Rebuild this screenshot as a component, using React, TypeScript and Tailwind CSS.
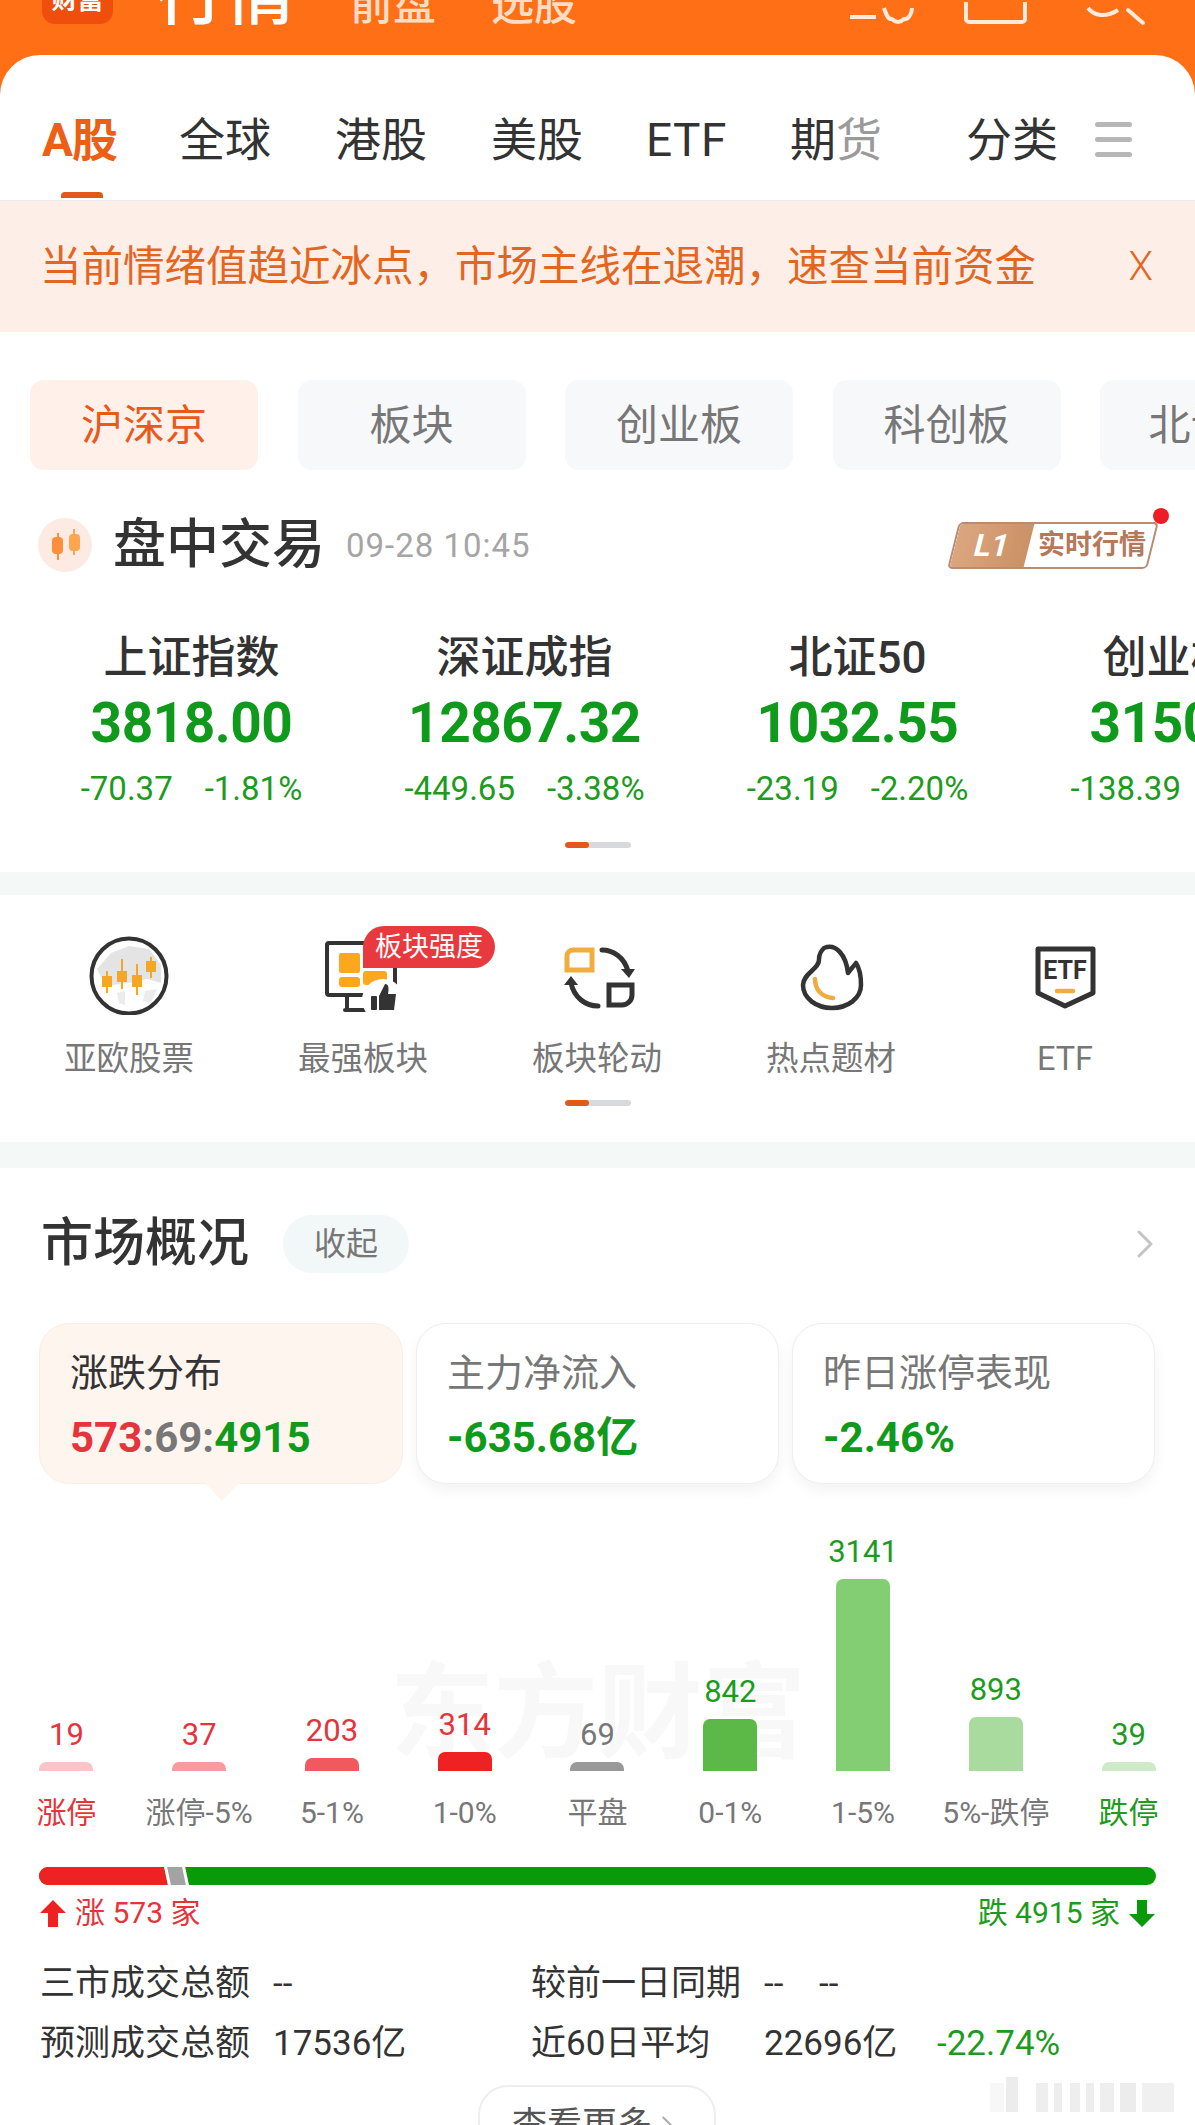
import { ChevronRight } from 'lucide-react';

const topTabs = [
  { label: 'A股', x: 'ml-[42px]' },
];

const pills = ['沪深京', '板块', '创业板', '科创板', '北证50'];

const indices = [
  { name: '上证指数', value: '3818.00', diff: '-70.37', pct: '-1.81%' },
  { name: '深证成指', value: '12867.32', diff: '-449.65', pct: '-3.38%' },
  { name: '北证50', value: '1032.55', diff: '-23.19', pct: '-2.20%' },
  { name: '创业板指', value: '3150.62', diff: '-138.39', pct: '-4.21%' },
];

const bars = [
  { value: '19', label: '涨停', h: 'h-[9px]', bar: 'bg-[#fcc4c8]', text: 'text-[#e5343b]', labelText: 'text-[#e5343b]' },
  { value: '37', label: '涨停-5%', h: 'h-[9px]', bar: 'bg-[#f99a9e]', text: 'text-[#e5343b]', labelText: 'text-[#777777]' },
  { value: '203', label: '5-1%', h: 'h-[13px]', bar: 'bg-[#f2595e]', text: 'text-[#e5343b]', labelText: 'text-[#777777]' },
  { value: '314', label: '1-0%', h: 'h-[19px]', bar: 'bg-[#ee2222]', text: 'text-[#e5343b]', labelText: 'text-[#777777]' },
  { value: '69', label: '平盘', h: 'h-[9px]', bar: 'bg-[#999999]', text: 'text-[#777777]', labelText: 'text-[#777777]' },
  { value: '842', label: '0-1%', h: 'h-[52px]', bar: 'bg-[#5cb947]', text: 'text-[#1d9b1d]', labelText: 'text-[#777777]' },
  { value: '3141', label: '1-5%', h: 'h-[192px]', bar: 'bg-[#83cd72]', text: 'text-[#1d9b1d]', labelText: 'text-[#777777]' },
  { value: '893', label: '5%-跌停', h: 'h-[54px]', bar: 'bg-[#aadb9e]', text: 'text-[#1d9b1d]', labelText: 'text-[#777777]' },
  { value: '39', label: '跌停', h: 'h-[9px]', bar: 'bg-[#cfeac9]', text: 'text-[#1d9b1d]', labelText: 'text-[#1d9b1d]' },
];

function GlobeIcon() {
  const candles = [
    { x: 18, wick: [36, 58], body: [41, 52] },
    { x: 33, wick: [24, 54], body: [36, 47] },
    { x: 48, wick: [29, 60], body: [40, 52] },
    { x: 62, wick: [22, 43], body: [26, 37] },
  ];
  return (
    <svg viewBox="0 0 80 80" className="w-20 h-20">
      <circle cx="40" cy="41" r="37.5" fill="#fff" stroke="#333" strokeWidth="4" />
      <path d="M8 34 L22 18 L40 11 L60 14 L72 30 L72 48 L58 44 L40 48 L24 50 L14 46Z" fill="#e4e4e4" />
      <path d="M56 56 L68 54 L62 68 L54 66Z M28 58 L36 56 L36 70 L30 68Z" fill="#ececec" />
      {candles.map((c) => (
        <g key={c.x}>
          <rect x={c.x - 1} y={c.wick[0]} width="2" height={c.wick[1] - c.wick[0]} fill="#f5a623" />
          <rect x={c.x - 5} y={c.body[0]} width="10" height={c.body[1] - c.body[0]} fill="#f5a623" />
        </g>
      ))}
    </svg>
  );
}

function MonitorIcon() {
  return (
    <div className="relative w-20 h-20">
      <svg viewBox="0 0 80 80" className="w-20 h-20 overflow-visible">
        <path d="M42 8 H6 a2 2 0 0 0-2 2 V58 a2 2 0 0 0 2 2 H70 a2 2 0 0 0 2-2 V30" fill="none" stroke="#333" strokeWidth="4" />
        <path d="M24 60 V74 M22 75 H46" fill="none" stroke="#333" strokeWidth="4" strokeLinecap="round" />
        <rect x="16" y="18" width="21" height="20" rx="2" fill="#fba81f" />
        <rect x="16" y="42" width="21" height="10" rx="3" fill="#fba81f" />
        <rect x="40" y="36" width="24" height="14" rx="3" fill="#fba81f" />
        <circle cx="60" cy="65" r="21" fill="#fff" />
        <rect x="48" y="61" width="6" height="14" rx="1" fill="#333" />
        <path d="M56 61 L62 49 C66 49 66 54 65 59 H73 L71 75 H56Z" fill="#333" />
      </svg>
      <div className="absolute left-[40px] top-[-9px] w-[132px] h-[42px] bg-[#e83a3e] rounded-r-full rounded-tl-full flex items-center justify-center text-[27px] leading-none text-white whitespace-nowrap">
        板块强度
      </div>
    </div>
  );
}

function RotateIcon() {
  return (
    <svg viewBox="0 0 80 80" className="w-20 h-20" fill="none" strokeWidth="5">
      <path d="M10 35 V21 a6 6 0 0 1 6-6 H35 V35 Z" stroke="#f0ad3d" />
      <path d="M52 50 H75 V60 a10 10 0 0 1-10 10 H52 Z" stroke="#333" />
      <path d="M45 15 C56 15 67 22 71 36" stroke="#333" strokeLinecap="round" />
      <path d="M64 34 L78 34 L72 43Z" fill="#333" />
      <path d="M41 71 C28 71 17 62 14 48" stroke="#333" strokeLinecap="round" />
      <path d="M7 50 L14 41 L21 50Z" fill="#333" />
    </svg>
  );
}

function FireIcon() {
  return (
    <svg viewBox="0 0 80 80" className="w-20 h-20" fill="none">
      <path
        d="M33 13 C45 8 55 20 57 38 C59 35 62 32 65 28 C69 34 70 42 70 50 C70 63 57 73 41 73 C25 73 12 63 12 50 C12 38 29 34 28 24 C28 20 30 16 33 13Z"
        stroke="#333"
        strokeWidth="4.5"
        strokeLinejoin="round"
      />
      <path d="M24 44 C24 55 31 62 42 63" stroke="#f0ad3d" strokeWidth="4.5" strokeLinecap="round" />
    </svg>
  );
}

function EtfIcon() {
  return (
    <svg viewBox="0 0 80 80" className="w-20 h-20" fill="none">
      <path d="M13 14 H68 V58 L40 71 L13 58 Z" stroke="#333" strokeWidth="5" strokeLinejoin="round" />
      <text x="40" y="44" textAnchor="middle" fontSize="25" fontWeight="700" fill="#333" fontFamily="Roboto, sans-serif">
        ETF
      </text>
      <path d="M32 56 H48" stroke="#f0ad3d" strokeWidth="4.5" strokeLinecap="round" />
    </svg>
  );
}

const shortcuts = [
  { label: '亚欧股票', icon: <GlobeIcon /> },
  { label: '最强板块', icon: <MonitorIcon /> },
  { label: '板块轮动', icon: <RotateIcon /> },
  { label: '热点题材', icon: <FireIcon /> },
  { label: 'ETF', icon: <EtfIcon /> },
];

function Dots() {
  return (
    <div className="w-[66px] h-[6px] mx-auto rounded-full bg-[#d8d9dd] overflow-hidden">
      <div className="w-[24px] h-full rounded-full bg-[#e0591a]" />
    </div>
  );
}

export default function App() {
  return (
    <div className="relative w-[1195px] h-[2125px] overflow-hidden bg-white text-[#333333] [font-family:Roboto,'Noto_Sans_CJK_SC',sans-serif]">
      {/* top orange bar, its upper half is scrolled off */}
      <div className="bg-[#ff6f16]">
        <div className="h-[55px] overflow-hidden">
          <div className="flex items-end h-[24px] pl-[42px]">
            <div className="w-[71px] h-[50px] shrink-0 bg-[#f04e0c] rounded-[13px] flex items-end justify-center pb-[11px] text-[26px] leading-none font-bold text-white">
              财富
            </div>
            <span className="ml-[42px] text-[70px] leading-[70px] font-medium text-white mb-[-6px]">行情</span>
            <span className="ml-[55px] text-[43px] leading-[43px] font-medium text-[#ffdcc5] mb-[-3px]">前盘</span>
            <span className="ml-[55px] text-[43px] leading-[43px] font-medium text-[#ffdcc5] mb-[-3px]">选股</span>
            <svg viewBox="0 0 300 20" className="w-[300px] h-[20px] ml-auto mr-[45px] mb-[-4px] overflow-visible" fill="none" stroke="#ffeadb" strokeWidth="4">
              <path d="M0 9 H26" />
              <path d="M34 0 C36 6 38 12 42 11 C46 15 50 15 54 11 C58 12 62 6 62 0" strokeLinejoin="round" />
              <path d="M116 -6 V11 a3 3 0 0 0 3 3 H172 a3 3 0 0 0 3-3 V-6" />
              <path d="M238 0 C244 8 256 10 268 2" />
              <path d="M278 2 L293 15" strokeLinecap="round" />
            </svg>
          </div>
        </div>

        {/* market tabs */}
        <div className="bg-white rounded-t-[40px] h-[145px] pt-[24px] flex items-center pl-[42px] text-[46px] leading-none">
          <div className="relative font-bold text-[#ec5f14] tracking-[-1px]">
            A股
            <div className="absolute left-[19px] bottom-[-35px] w-[42px] h-[6px] rounded-t-sm bg-[#e0591a]" />
          </div>
          <span className="ml-[62px]">全球</span>
          <span className="ml-[64px]">港股</span>
          <span className="ml-[64px]">美股</span>
          <span className="ml-[63px] tracking-[0.5px]">ETF</span>
          <span className="ml-[63px]">
            期<span className="text-[#9a9a9a]">货</span>
          </span>
          <span className="ml-[84px]">分类</span>
          <div className="ml-[37px] w-[37px] flex flex-col gap-[10px]">
            <div className="h-[5px] rounded-full bg-[#b7b7b7]" />
            <div className="h-[5px] rounded-full bg-[#b7b7b7]" />
            <div className="h-[5px] rounded-full bg-[#b7b7b7]" />
          </div>
        </div>
      </div>

      {/* hint banner */}
      <div className="h-[132px] border-t border-[#ececec] bg-[#fdeee7] flex items-center pl-[40px] pr-[42px] justify-between text-[#e2661f]">
        <span className="text-[41.5px] leading-none whitespace-nowrap">当前情绪值趋近冰点，市场主线在退潮，速查当前资金</span>
        <span className="text-[40px] leading-none font-light">X</span>
      </div>

      {/* board pills */}
      <div className="mt-[48px] pl-[30px] flex gap-[39.5px] overflow-hidden">
        {pills.map((p, i) => (
          <div
            key={p}
            className={
              i === 0
                ? 'w-[228px] h-[90px] shrink-0 rounded-[14px] bg-[#fff0e9] text-[#e8591a] text-[42px] flex items-center justify-center'
                : 'w-[228px] h-[90px] shrink-0 rounded-[14px] bg-[#f7f8fa] text-[#777777] text-[42px] flex items-center justify-center whitespace-nowrap'
            }
          >
            {p}
          </div>
        ))}
      </div>

      {/* session title */}
      <div className="mt-[48px] pl-[38px] pr-[42px] h-[54px] flex items-center">
        <div className="w-[54px] h-[54px] shrink-0 rounded-full bg-[#fdeae2]">
          <svg viewBox="0 0 54 54" className="w-[54px] h-[54px]">
            <path d="M20 15 V42" stroke="#fb8f3d" strokeWidth="2" />
            <rect x="14" y="19" width="11" height="17" rx="4" fill="#fb8f3d" />
            <path d="M36 11 V37" stroke="#fca64f" strokeWidth="2" />
            <rect x="31" y="16" width="11" height="17" rx="4" fill="#fca64f" />
          </svg>
        </div>
        <span className="ml-[21px] text-[53px] leading-none font-medium">盘中交易</span>
        <span className="ml-[21px] text-[33px] leading-none text-[#a5a5a5] tracking-[1px]">09-28 10:45</span>
        <div className="relative ml-auto">
          <div className="w-[200px] h-[47px] -skew-x-[14deg] rounded-[5px] border-2 border-[#bb8a72] overflow-hidden flex items-center">
            <div className="w-[74px] h-full bg-gradient-to-r from-[#dba67f] to-[#cb9167] flex items-center justify-center">
              <span className="text-[31px] leading-none font-bold text-white">L1</span>
            </div>
            <span className="ml-[9px] skew-x-[14deg] text-[27px] leading-none font-bold text-[#b5785a] whitespace-nowrap">实时行情</span>
          </div>
          <div className="absolute right-[-16px] top-[-14px] w-[16px] h-[16px] rounded-full bg-[#ee1c25]" />
        </div>
      </div>

      {/* index quotes */}
      <div className="mt-[58px] pl-[25px] flex">
        {indices.map((d) => (
          <div key={d.name} className="w-[333px] shrink-0 flex flex-col items-center">
            <div className="h-[56px] flex items-center text-[44px] font-medium leading-none whitespace-nowrap">{d.name}</div>
            <div className="h-[74px] flex items-center text-[55px] font-bold leading-none text-[#0f9a1c] tracking-[-0.5px]">{d.value}</div>
            <div className="h-[56px] flex items-center gap-[32px] text-[33px] leading-none text-[#1d9b1d] whitespace-nowrap">
              <span>{d.diff}</span>
              <span>{d.pct}</span>
            </div>
          </div>
        ))}
      </div>
      <div className="mt-[26px]">
        <Dots />
      </div>
      <div className="mt-[24px] h-[23px] bg-[#f4f8f7]" />

      {/* shortcuts */}
      <div className="pt-[40px] pl-[12px] flex">
        {shortcuts.map((s) => (
          <div key={s.label} className="w-[234px] shrink-0 flex flex-col items-center">
            {s.icon}
            <div className="mt-[20px] h-[48px] flex items-center text-[32.5px] leading-none text-[#777777]">{s.label}</div>
          </div>
        ))}
      </div>
      <div className="mt-[17px]">
        <Dots />
      </div>
      <div className="mt-[36px] h-[26px] bg-[#f4f8f7]" />

      {/* market overview */}
      <div className="mt-[47px] pl-[41px] pr-[26px] h-[58px] flex items-center">
        <span className="text-[52px] leading-none font-medium">市场概况</span>
        <div className="ml-[34px] w-[126px] h-[58px] rounded-[29px] bg-[#f2f7f7] flex items-center justify-center text-[32px] leading-none text-[#777777]">
          收起
        </div>
        <ChevronRight className="ml-auto w-[48px] h-[48px] text-[#c4c4c4]" strokeWidth={1.5} />
      </div>

      <div className="mt-[50px] px-[39px] flex gap-[13px]">
        <div className="relative w-[364px] h-[161px] rounded-[30px] bg-[#fff5ef] border border-[#fbeee4] pl-[30px] pt-[29px]">
          <div className="text-[38px] leading-[40px] whitespace-nowrap">涨跌分布</div>
          <div className="mt-[23px] text-[42px] leading-[44px] font-bold whitespace-nowrap text-[#777777]">
            <span className="text-[#e5343b]">573</span>:69:<span className="text-[#0f9a1c]">4915</span>
          </div>
          <div className="absolute left-[165px] bottom-[-18px] w-0 h-0 border-l-[17px] border-r-[17px] border-t-[18px] border-l-transparent border-r-transparent border-t-[#fff5ef]" />
        </div>
        <div className="w-[363px] h-[161px] rounded-[30px] bg-white border border-[#eeeeee] shadow-[0_6px_14px_rgba(0,0,0,0.05)] pl-[30px] pt-[29px]">
          <div className="text-[38px] leading-[40px] text-[#777777] whitespace-nowrap">主力净流入</div>
          <div className="mt-[23px] text-[42px] leading-[44px] font-bold text-[#0f9a1c] whitespace-nowrap">-635.68亿</div>
        </div>
        <div className="w-[363px] h-[161px] rounded-[30px] bg-white border border-[#eeeeee] shadow-[0_6px_14px_rgba(0,0,0,0.05)] pl-[30px] pt-[29px]">
          <div className="text-[38px] leading-[40px] text-[#777777] whitespace-nowrap">昨日涨停表现</div>
          <div className="mt-[23px] text-[42px] leading-[44px] font-bold text-[#0f9a1c] whitespace-nowrap">-2.46%</div>
        </div>
      </div>

      {/* rise / fall histogram */}
      <div className="relative">
        <div className="absolute left-[390px] bottom-[4px] text-[104px] leading-none font-bold text-[#f8f8f8] whitespace-nowrap">东方财富</div>
        <div className="relative h-[287px] grid grid-cols-9 items-end">
          {bars.map((b) => (
            <div key={b.label} className="flex flex-col items-center">
              <div className={`h-[40px] mb-[8px] flex items-center text-[31px] leading-none ${b.text}`}>{b.value}</div>
              <div className={`w-[54px] rounded-t-[7px] ${b.h} ${b.bar}`} />
            </div>
          ))}
        </div>
      </div>
      <div className="mt-[24px] grid grid-cols-9">
        {bars.map((b) => (
          <div key={b.label} className={`h-[36px] flex items-center justify-center text-[30px] leading-none whitespace-nowrap ${b.labelText}`}>
            {b.label}
          </div>
        ))}
      </div>

      {/* breadth bar */}
      <div className="mt-[36px] mx-[39px] h-[18px] rounded-full overflow-hidden flex bg-[#089a08]">
        <div className="w-[131px] -ml-[4px] shrink-0 skew-x-[12deg] bg-[#ee2222]" />
        <div className="w-[21px] shrink-0 skew-x-[12deg] bg-[#a3a3a3] border-x-[3px] border-white" />
      </div>
      <div className="mt-[10px] mx-[40px] h-[36px] flex items-center justify-between text-[30px] leading-none">
        <div className="flex items-center text-[#e5343b]">
          <svg viewBox="0 0 26 27" className="w-[26px] h-[27px]">
            <path d="M13 0 L26 13 H18 V27 H8 V13 H0Z" fill="#ee2222" />
          </svg>
          <span className="ml-[9px]">涨 573 家</span>
        </div>
        <div className="flex items-center text-[#1d9b1d]">
          <span className="mr-[9px]">跌 4915 家</span>
          <svg viewBox="0 0 26 27" className="w-[26px] h-[27px]">
            <path d="M13 27 L0 14 H8 V0 H18 V14 H26Z" fill="#089a08" />
          </svg>
        </div>
      </div>

      {/* turnover */}
      <div className="mt-[22px] pl-[40px] text-[35px] leading-none whitespace-nowrap">
        <div className="h-[60px] flex items-center">
          <span className="w-[233px]">三市成交总额</span>
          <span className="w-[258px]">--</span>
          <span className="w-[233px]">较前一日同期</span>
          <span className="w-[55px]">--</span>
          <span>--</span>
        </div>
        <div className="h-[60px] flex items-center">
          <span className="w-[233px]">预测成交总额</span>
          <span className="w-[258px]">17536亿</span>
          <span className="w-[233px]">近60日平均</span>
          <span className="w-[173px]">22696亿</span>
          <span className="text-[#1d9b1d]">-22.74%</span>
        </div>
      </div>

      <div className="mt-[12px] ml-[478px] w-[238px] h-[80px] rounded-[30px] border-2 border-[#eeeeee] flex items-center justify-center text-[35px] leading-none text-[#555555]">
        查看更多
        <ChevronRight className="w-[30px] h-[30px] text-[#aaaaaa]" strokeWidth={1.5} />
      </div>

      {/* screenshot watermark */}
      <svg viewBox="0 0 195 36" className="absolute left-[990px] top-[2077px] w-[195px] h-[36px]">
        <rect x="0" y="6" width="14" height="29" fill="#f7f7f7" />
        <rect x="16" y="0" width="12" height="35" fill="#ececec" />
        <rect x="46" y="6" width="12" height="29" fill="#eeeeee" />
        <rect x="64" y="6" width="8" height="29" fill="#ededed" />
        <rect x="80" y="6" width="10" height="29" fill="#eeeeee" />
        <rect x="96" y="6" width="8" height="29" fill="#ededed" />
        <rect x="110" y="6" width="14" height="29" fill="#eeeeee" />
        <rect x="130" y="6" width="16" height="29" fill="#ececec" />
        <rect x="152" y="6" width="32" height="29" fill="#f0f0f0" />
      </svg>
    </div>
  );
}
